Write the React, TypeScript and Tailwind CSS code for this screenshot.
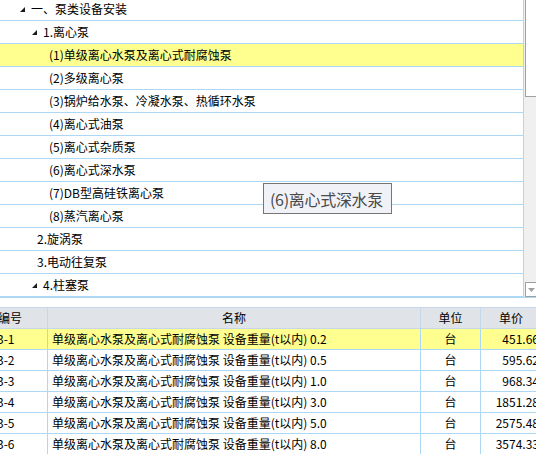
import React from "react";

const Tri = () => (
  <svg width="5" height="5" viewBox="0 0 5 5" className="shrink-0">
    <polygon points="5,0 5,5 0,5" fill="#1a1a1a" />
  </svg>
);

type Row = { text: string; pl: number; arrow?: boolean; sel?: boolean };

const treeRows: Row[] = [
  { text: "一、泵类设备安装", pl: 20, arrow: true },
  { text: "1.离心泵", pl: 32, arrow: true },
  { text: "(1)单级离心水泵及离心式耐腐蚀泵", pl: 49, sel: true },
  { text: "(2)多级离心泵", pl: 49 },
  { text: "(3)锅炉给水泵、冷凝水泵、热循环水泵", pl: 49 },
  { text: "(4)离心式油泵", pl: 49 },
  { text: "(5)离心式杂质泵", pl: 49 },
  { text: "(6)离心式深水泵", pl: 49 },
  { text: "(7)DB型高硅铁离心泵", pl: 49 },
  { text: "(8)蒸汽离心泵", pl: 49 },
  { text: "2.旋涡泵", pl: 37 },
  { text: "3.电动往复泵", pl: 37 },
  { text: "4.柱塞泵", pl: 32, arrow: true },
];

const tableRows = [
  { code: "3-1", w: "0.2", price: "451.66", sel: true },
  { code: "3-2", w: "0.5", price: "595.62" },
  { code: "3-3", w: "1.0", price: "968.34" },
  { code: "3-4", w: "3.0", price: "1851.28" },
  { code: "3-5", w: "5.0", price: "2575.48" },
  { code: "3-6", w: "8.0", price: "3574.33" },
];

export default function App() {
  return (
    <div
      className="relative w-[536px] h-[454px] overflow-hidden bg-white text-[12px] text-black"
      style={{ fontFamily: '"Noto Sans CJK SC", "Microsoft YaHei", sans-serif' }}
    >
      {/* Tree panel */}
      <div className="flex h-[298px] border-b border-[#acd8f6]">
        <div className="w-[524px] h-full overflow-hidden border-r border-[#acd8f6]">
          <div className="mt-[-2px]">
            {treeRows.map((r, i) => (
              <div
                key={i}
                className={`flex items-center h-[23px] border-b border-[#acd8f6] ${
                  r.sel ? "bg-[#ffff8f]" : "bg-white"
                }`}
                style={{ paddingLeft: r.pl }}
              >
                {r.arrow && (
                  <span className="flex items-center w-[11px] mt-[1px]">
                    <Tri />
                  </span>
                )}
                <span className="whitespace-nowrap leading-none">{r.text}</span>
              </div>
            ))}
          </div>
        </div>
        {/* scrollbar */}
        <div className="flex-1 flex flex-col justify-between bg-[#f0f0f0]">
          <div className="ml-[1px] h-[97px] border-l border-b border-[#a0a0a0] bg-white" />
          <div className="ml-[1px] h-[15px] border border-r-0 border-[#a0a0a0] bg-white flex items-center justify-center">
            <svg width="7" height="4" viewBox="0 0 7 4">
              <polygon points="0,0 7,0 3.5,4" fill="#a0a0a0" />
            </svg>
          </div>
        </div>
      </div>

      <div className="h-[9px] bg-white" />

      {/* Table */}
      <div className="w-[541px]">
        <div className="flex h-[22px] bg-[#e0e3e8] border-t border-b border-[#c4d8ea] text-[12px]">
          <div className="w-[48px] shrink-0 border-r border-[#c4d8ea] flex items-center">
            <span className="ml-[-2px] leading-none">编号</span>
          </div>
          <div className="w-[373px] shrink-0 border-r border-[#c4d8ea] flex items-center justify-center">
            <span className="leading-none">名称</span>
          </div>
          <div className="w-[60px] shrink-0 border-r border-[#c4d8ea] flex items-center justify-center">
            <span className="leading-none">单位</span>
          </div>
          <div className="w-[60px] shrink-0 flex items-center justify-center">
            <span className="leading-none">单价</span>
          </div>
        </div>
        {tableRows.map((r, i) => (
          <div
            key={i}
            className={`flex h-[21px] border-b border-[#acd8f6] ${
              r.sel ? "bg-[#ffff8f]" : "bg-white"
            }`}
          >
            <div className="w-[48px] shrink-0 border-r border-[#acd8f6] flex items-center">
              <span className="ml-[-3px] leading-none whitespace-nowrap">{r.code}</span>
            </div>
            <div className="w-[373px] shrink-0 border-r border-[#acd8f6] flex items-center pl-[4px]">
              <span className="leading-none whitespace-nowrap">
                单级离心水泵及离心式耐腐蚀泵 设备重量(t以内) {r.w}
              </span>
            </div>
            <div className="w-[60px] shrink-0 border-r border-[#acd8f6] flex items-center justify-center">
              <span className="leading-none">台</span>
            </div>
            <div className="w-[60px] shrink-0 flex items-center justify-end pr-[2px]">
              <span className="leading-none">{r.price}</span>
            </div>
          </div>
        ))}
      </div>

      {/* Tooltip */}
      <div className="absolute left-[263px] top-[183px] w-[129px] h-[31px] border border-[#767676] bg-[#f1f2f7] flex items-center pl-[6px]">
        <span className="text-[16px] leading-none text-[#4a4a4a] whitespace-nowrap tracking-[-0.3px]">
          (6)离心式深水泵
        </span>
      </div>
    </div>
  );
}
